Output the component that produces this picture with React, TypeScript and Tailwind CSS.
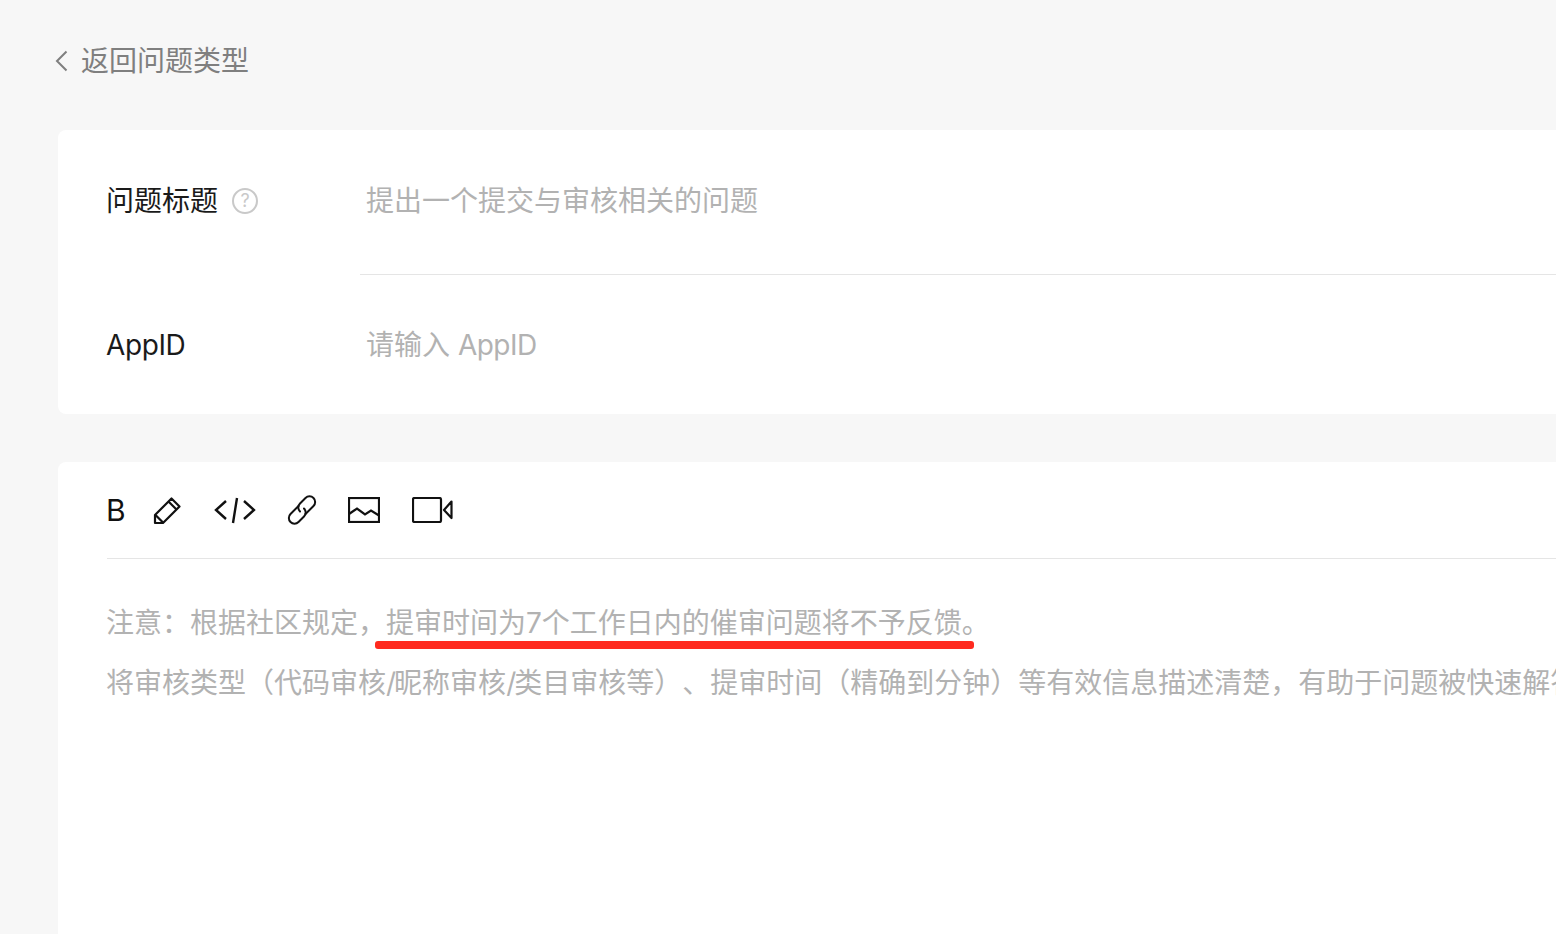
const font = { cjk: "font-['Inter','Noto_Sans_CJK_SC',sans-serif]" }

function Slash() {
  return <span className="tracking-[-2px]">/</span>
}

function Toolbar() {
  return (
    <div className="flex items-center h-[97px] ml-px border-b border-[#e5e5e5] text-[#111]">
      <span className="w-[19px] -ml-px mr-px text-[30px] leading-none font-['Inter',sans-serif] font-normal">B</span>
      <svg className="ml-[27px]" width="30" height="30" viewBox="0 0 30 30" fill="none" stroke="currentColor" strokeWidth="2.2">
        <path d="M2 28v-8L18.5 3.5l8 8L10 28z" strokeLinejoin="round" />
        <path d="M15.5 6.5l8 8M2.5 20l7.5 7.5" />
      </svg>
      <svg className="ml-[30px]" width="44" height="30" viewBox="0 0 44 30" fill="none" stroke="currentColor" strokeWidth="2.4">
        <path d="M13 6L3 15l10 9M31 6l10 9-10 9M24 3l-4 25" />
      </svg>
      <svg className="ml-[29px]" width="32" height="32" viewBox="0 0 32 32" fill="none" stroke="currentColor" strokeWidth="2" strokeLinecap="round">
        <path d="M12.5 12l-8 8a5.6 5.6 0 0 0 8 8l5.5-5.5a5.6 5.6 0 0 0 0-8" />
        <path d="M19.5 20l8-8a5.6 5.6 0 0 0-8-8L14 9.500a5.6 5.600 0 0 0 0 8" />
      </svg>
      <svg className="ml-[30px]" width="32" height="26" viewBox="0 0 32 26" fill="none" stroke="currentColor" strokeWidth="2.2">
        <rect x="1" y="1" width="30" height="24" />
        <path d="M1 17l8-5.500 8 6 6-4 8 5" />
      </svg>
      <svg className="ml-[32px]" width="42" height="26" viewBox="0 0 42 26" fill="none" stroke="currentColor" strokeWidth="2.2" strokeLinejoin="round">
        <rect x="1" y="1" width="28" height="24" rx="1.5" />
        <path d="M39.5 4.5L32 13l7.5 8z" />
      </svg>
    </div>
  )
}

export default function App() {
  return (
    <div className={`h-[934px] w-full overflow-hidden bg-[#f7f7f7] [text-spacing-trim:space-all] ${font.cjk}`}>
      <div className="flex items-center h-[130px] pl-[55px] pb-[8px] text-[#7f7f7f]">
        <svg width="13" height="24" viewBox="0 0 13 24" fill="none" stroke="currentColor" strokeWidth="2">
          <path d="M11.500 2.500L2 12l9.500 9.500" />
        </svg>
        <span className="ml-[13px] text-[28px] leading-none">返回问题类型</span>
      </div>

      <div className="ml-[58px] bg-white rounded-tl-[8px] rounded-bl-[8px] h-[284px] pl-[48px]">
        <div className="flex h-[145px] pt-[52px]">
          <div className="flex items-start w-[254px] text-[#1a1a1a] text-[28px] leading-[38px]">
            问题标题
            <span className="ml-[14px] mt-[6px] flex items-center justify-center w-[26px] h-[26px] rounded-full border-2 border-[#c9c9c9] text-[#c9c9c9] text-[18px] leading-none">
              ?
            </span>
          </div>
          <div className="flex-1 border-b border-[#e5e5e5] pl-[6px] text-[#b2b2b2] text-[28px] leading-[38px]">
            提出一个提交与审核相关的问题
          </div>
        </div>
        <div className="flex pt-[51px]">
          <div className="w-[254px] text-[#1a1a1a] text-[28px] leading-[38px] tracking-[-0.4px]">AppID</div>
          <div className="pl-[6px] text-[#b2b2b2] text-[28px] leading-[38px]">
            请输入 <span className="tracking-[-0.5px]">AppID</span>
          </div>
        </div>
      </div>

      <div className="relative ml-[58px] mt-[48px] bg-white rounded-tl-[8px] h-[500px] pl-[48px] overflow-hidden">
        <Toolbar />
        <div className="pt-[44px] text-[#b2b2b2] text-[28px] leading-[40px] whitespace-nowrap">
          <p>注意：根据社区规定，提审时间为7个工作日内的催审问题将不予反馈。</p>
          <p className="mt-[20px]">
            将审核类型（代码审核<Slash />昵称审核<Slash />类目审核等）、提审时间（精确到分钟）等有效信息描述清楚，有助于问题被快速解答。
          </p>
        </div>
        <div className="absolute left-[317px] top-[179px] w-[599px] h-[8px] rounded-[3px] bg-[#ff2a1f]" />
      </div>
    </div>
  )
}
